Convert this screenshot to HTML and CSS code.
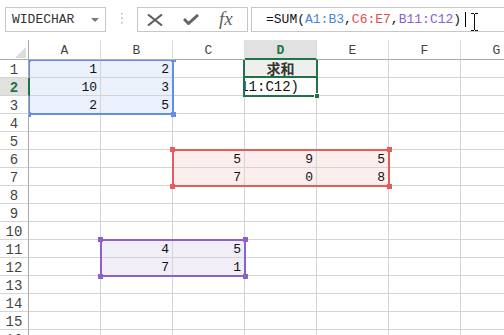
FILE: index.html
```html
<!DOCTYPE html>
<html lang="en">
<head>
    <meta charset="UTF-8">
    <meta name="viewport" content="width=device-width, initial-scale=1.0">
    <title>WIDECHAR - SUM</title>
    <link rel="stylesheet" href="styles.css">
</head>
<body>
    <div class="toolbar">
        <div class="name-box">
            <span>WIDECHAR</span>
            <span class="arrow"></span>
        </div>
        <div class="grip">
            <svg width="3" height="13" viewBox="0 0 3 13">
                <rect x="1" y="1" width="1.5" height="1.5" fill="#b4b4b4"/>
                <rect x="1" y="5.5" width="1.5" height="1.5" fill="#b4b4b4"/>
                <rect x="1" y="10" width="1.5" height="1.5" fill="#b4b4b4"/>
            </svg>
        </div>
        <div class="func-box">
            <svg class="icon" width="16" height="12" viewBox="0 0 16 12">
                <path d="M1 0.5 L15 11.5 M15 0.5 L1 11.5" stroke="#5c5c5c" stroke-width="2" fill="none"/>
            </svg>
            <svg class="icon" width="16" height="11" viewBox="0 0 16 11">
                <path d="M1 5 L5.5 9.5 L15 1" stroke="#646464" stroke-width="3" fill="none"/>
            </svg>
            <span class="fx">fx</span>
        </div>
        <div class="formula">
            <span>=SUM(<span class="ref-blue">A1:B3</span>,<span class="ref-red">C6:E7</span>,<span class="ref-purple">B11:C12</span>)</span>
            <span class="caret"></span>
            <svg class="ibeam" width="9" height="18" viewBox="0 0 9 18">
                <path d="M1 0.5 H4 M5 0.5 H8 M4.5 1 V17 M1 17.5 H4 M5 17.5 H8" stroke="#111" stroke-width="1" fill="none"/>
            </svg>
        </div>
    </div>

    <div class="sheet">
        <div class="grid" id="grid"></div>

        <div class="range range-blue">
            <span class="handle tl"></span><span class="handle tr"></span>
            <span class="handle bl"></span><span class="handle br"></span>
        </div>
        <div class="range range-red">
            <span class="handle tl"></span><span class="handle tr"></span>
            <span class="handle bl"></span><span class="handle br"></span>
        </div>
        <div class="range range-purple">
            <span class="handle tl"></span><span class="handle tr"></span>
            <span class="handle bl"></span><span class="handle br"></span>
        </div>

        <div class="title-frame"></div>
        <div class="active-cell"><span class="fill-handle"></span></div>
    </div>

    <script>
        const grid = document.getElementById('grid');
        const cols = ['A', 'B', 'C', 'D', 'E', 'F', 'G'];
        const rowCount = 16;

        const values = {
            A1: '1', B1: '2',
            A2: '10', B2: '3',
            A3: '2', B3: '5',
            C6: '5', D6: '9', E6: '5',
            C7: '7', D7: '0', E7: '8',
            B11: '4', C11: '5',
            B12: '7', C12: '1'
        };

        // highlighted ranges from the formula
        const ranges = [
            { cls: 'fill-blue', c1: 0, c2: 1, r1: 1, r2: 3 },
            { cls: 'fill-red', c1: 2, c2: 4, r1: 6, r2: 7 },
            { cls: 'fill-purple', c1: 1, c2: 2, r1: 11, r2: 12 }
        ];

        function addCell(className, text) {
            const cell = document.createElement('div');
            cell.className = 'cell ' + className;
            if (text !== undefined) cell.textContent = text;
            grid.appendChild(cell);
            return cell;
        }

        // header row
        const corner = addCell('col-head corner');
        corner.innerHTML = '<svg width="11" height="11" viewBox="0 0 11 11"><path d="M11 0 V11 H0 Z" fill="#dcdcdc"/></svg>';
        cols.forEach(col => {
            addCell(col === 'D' ? 'col-head selected' : 'col-head', col);
        });

        for (let r = 1; r <= rowCount; r++) {
            addCell(r === 2 ? 'row-head selected' : 'row-head', r);
            cols.forEach((col, c) => {
                const ref = col + r;
                let cls = '';
                ranges.forEach(range => {
                    if (c >= range.c1 && c <= range.c2 && r >= range.r1 && r <= range.r2) cls = range.cls;
                });
                if (ref === 'D1') {
                    addCell('title-cell', '求和');
                } else if (ref === 'D2') {
                    const cell = addCell('editing');
                    cell.innerHTML = '<span>=SUM(A1:B3,C6:E7,B11:C12)</span>';
                } else {
                    addCell(cls, values[ref]);
                }
            });
        }
    </script>
</body>
</html>
```

FILE: styles.css
```css
* {
    margin: 0;
    padding: 0;
    box-sizing: border-box;
}

body {
    font-family: "Liberation Mono", "Noto Sans CJK SC", monospace;
    font-size: 13px;
    color: #222;
    background: #fff;
    width: 504px;
    height: 335px;
    overflow: hidden;
}

/* formula bar */
.toolbar {
    display: flex;
    align-items: flex-start;
    height: 40px;
    padding: 7px 0 0 5px;
}

.name-box {
    width: 101px;
    height: 25px;
    border: 1px solid #c6c6c6;
    display: flex;
    align-items: center;
    justify-content: space-between;
    padding: 0 6px 0 6px;
    color: #333;
}

.arrow {
    width: 0;
    height: 0;
    border-left: 4px solid transparent;
    border-right: 4px solid transparent;
    border-top: 4px solid #7a7a7a;
}

.grip {
    width: 31px;
    display: flex;
    justify-content: center;
    padding-top: 5px;
}

.func-box {
    width: 111px;
    height: 25px;
    border: 1px solid #c6c6c6;
    display: flex;
    align-items: center;
    gap: 20px;
    padding-left: 9px;
}

.fx {
    font-family: "Liberation Serif", serif;
    font-style: italic;
    font-size: 19px;
    color: #606060;
    margin-top: -2px;
}

.formula {
    flex: 1;
    height: 25px;
    margin-left: 3px;
    border: 1px solid #c6c6c6;
    border-right: none;
    display: flex;
    align-items: center;
    padding-left: 14px;
    color: #111;
    white-space: nowrap;
}

.ref-blue { color: #4a82e0; }
.ref-red { color: #e24d4d; }
.ref-purple { color: #8b5ec9; }

.caret {
    width: 1px;
    height: 15px;
    background: #000;
    margin-left: 4px;
}

.ibeam {
    margin-left: 4px;
    margin-top: 4px;
}

/* sheet */
.sheet {
    position: relative;
}

.grid {
    display: grid;
    grid-template-columns: 29px repeat(7, 72px);
    grid-template-rows: 20px;
    grid-auto-rows: 18px;
}

.cell {
    border-right: 1px solid #d4d4d4;
    border-bottom: 1px solid #d4d4d4;
    overflow: hidden;
    white-space: nowrap;
    line-height: 17px;
    padding: 1px 3px 0 0;
    text-align: right;
    color: #111;
}

.col-head {
    position: relative;
    z-index: 3;
    background: #fff;
    text-align: center;
    color: #444;
    padding: 1px 0 0 0;
    line-height: 19px;
    border-right-color: #dcdcdc;
    border-bottom-color: #ababab;
}

.corner {
    display: flex;
    align-items: flex-end;
    justify-content: flex-end;
    padding: 0 2px 1px 0;
    border-right-color: #a6a6a6;
}

.col-head.selected {
    background: #e1e1e1;
    color: #217346;
    font-weight: bold;
    border-bottom: 2px solid #217346;
}

.row-head {
    position: relative;
    z-index: 3;
    background: #fff;
    text-align: center;
    color: #444;
    padding: 2px 0 0 0;
    font-size: 14px;
    line-height: 16px;
    border-right-color: #a6a6a6;
}

.row-head.selected {
    background: #e1e1e1;
    color: #217346;
    font-weight: bold;
    border-right-color: #217346;
    box-shadow: 1px 0 0 #217346;
}

.fill-blue { background: #eaf0fc; }
.fill-red { background: #fdeeee; }
.fill-purple { background: #f1eef8; }

.title-cell {
    background: #efefef;
    text-align: center;
    padding: 0;
    font-family: "Noto Sans CJK SC", sans-serif;
    font-weight: bold;
    font-size: 14px;
    color: #333;
}

.editing {
    display: flex;
    justify-content: flex-end;
    padding-right: 17px;
    font-size: 14px;
}

.editing span {
    flex-shrink: 0;
}

/* range outlines drawn over the grid */
.range {
    position: absolute;
    z-index: 2;
    border: 2px solid;
}

.range-blue {
    left: 28px;
    top: 19px;
    width: 146px;
    height: 56px;
    border-color: #5f8fe6;
}

.range-red {
    left: 172px;
    top: 109px;
    width: 218px;
    height: 38px;
    border-color: #e45c5c;
}

.range-purple {
    left: 100px;
    top: 199px;
    width: 146px;
    height: 38px;
    border-color: #8c62c8;
}

.handle {
    position: absolute;
    width: 5px;
    height: 5px;
}

.range-blue .handle { background: #5f8fe6; }
.range-red .handle { background: #e45c5c; }
.range-purple .handle { background: #8c62c8; }

.handle.tl { left: -4px; top: -4px; }
.handle.tr { right: -4px; top: -4px; }
.handle.bl { left: -4px; bottom: -4px; }
.handle.br { right: -4px; bottom: -4px; }

.title-frame {
    position: absolute;
    z-index: 2;
    left: 243px;
    top: 18px;
    width: 75px;
    height: 20px;
    border-left: 2px solid #217346;
    border-right: 2px solid #217346;
}

.active-cell {
    position: absolute;
    z-index: 2;
    left: 243px;
    top: 36px;
    width: 75px;
    height: 21px;
    border: 2px solid #217346;
}

.fill-handle {
    position: absolute;
    right: -3px;
    bottom: -3px;
    width: 5px;
    height: 5px;
    background: #217346;
    border: 1px solid #fff;
    border-right: none;
    border-bottom: none;
}
```
